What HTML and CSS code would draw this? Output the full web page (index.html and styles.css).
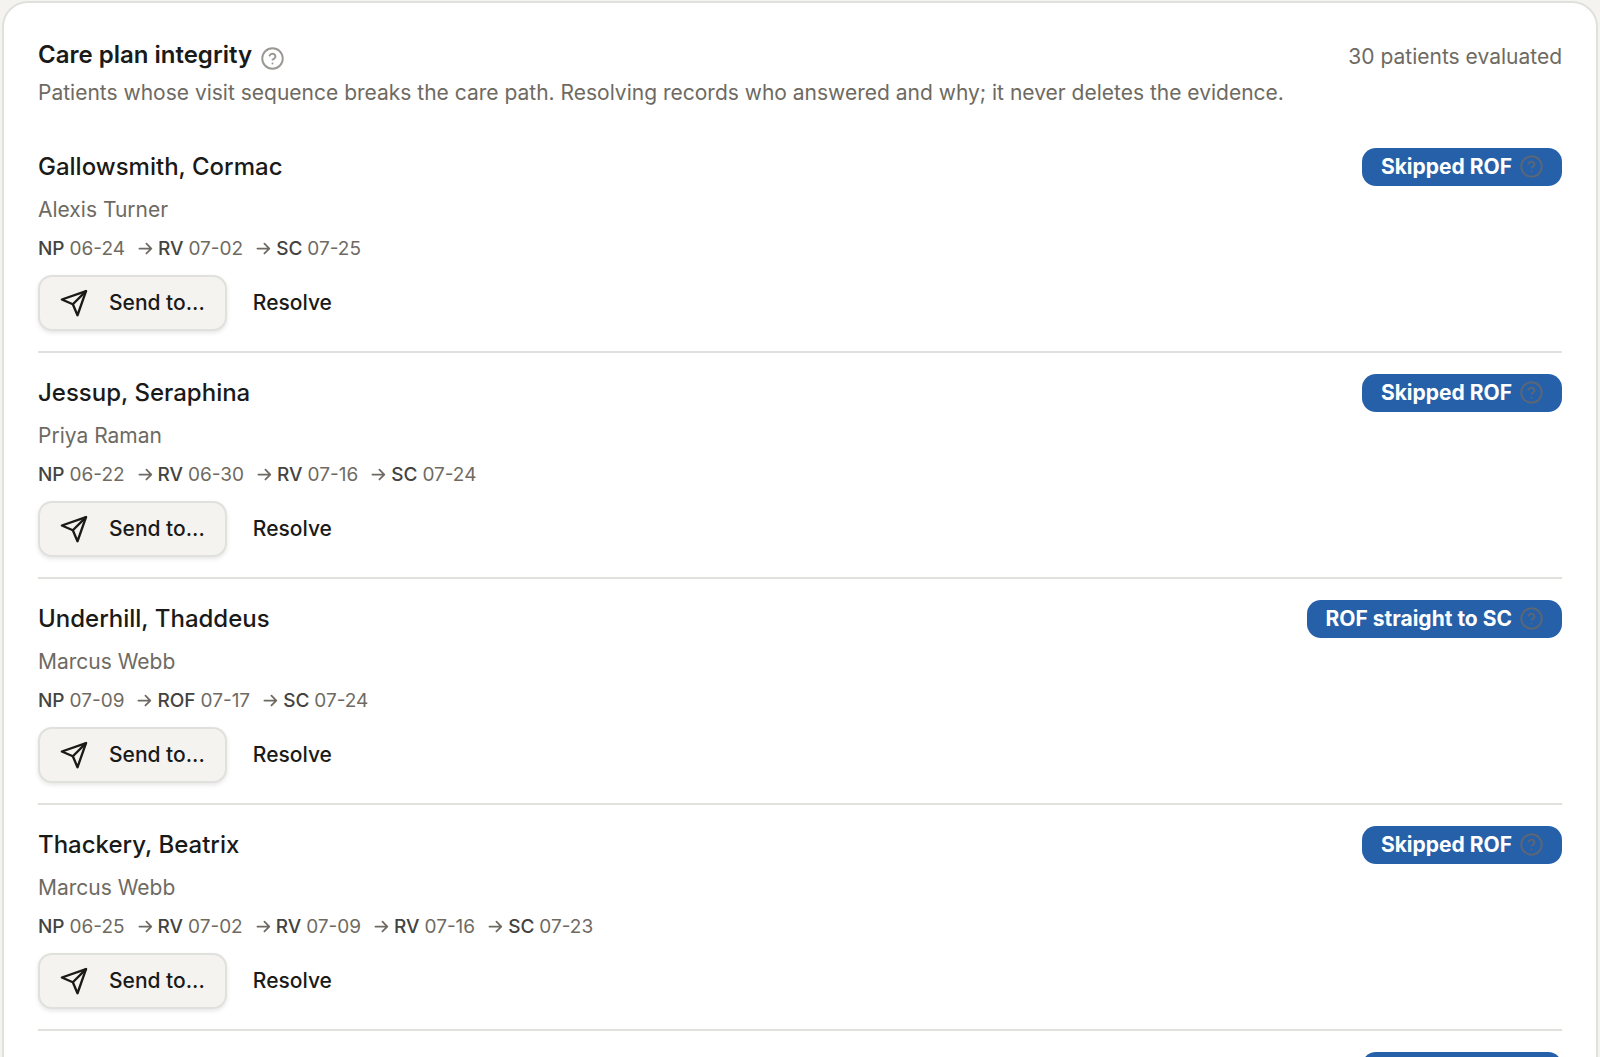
FILE: index.html
```html
<!DOCTYPE html>
<html lang="en">
<head>
<meta charset="utf-8">
<title>Care plan integrity</title>
<link rel="stylesheet" href="styles.css">
</head>
<body>
<svg class="sprite" aria-hidden="true">
  <symbol id="help" viewBox="0 0 24 24" fill="none" stroke="currentColor" stroke-width="2" stroke-linecap="round" stroke-linejoin="round"><circle cx="12" cy="12" r="10.700"/><path d="M9 9a3.100 3.100 0 0 1 6 1c0 2.100-3 3.100-3 3.100"/><path d="M12 17.200h.01"/></symbol>
  <symbol id="send" viewBox="0 0 24 24" fill="none" stroke="currentColor" stroke-width="2" stroke-linecap="round" stroke-linejoin="round"><path d="M22.300 1.800 15 22.500 11 13.100 1.600 9Z"/><path d="M22.300 1.800 11 13.100"/></symbol>
  <symbol id="arrow" viewBox="0 0 16 16" fill="none" stroke="currentColor" stroke-width="1.900" stroke-linecap="round" stroke-linejoin="round"><path d="M1.500 7h12.700M9 1.800 14.200 7 9 12.200"/></symbol>
</svg>
<main class="card">
  <header class="card-header">
    <div class="title-row">
      <h1 class="title">Care plan integrity</h1>
      <button class="help" type="button" aria-label="About care plan integrity"><svg class="icon-help"><use href="#help"/></svg></button>
      <span class="count">30 patients evaluated</span>
    </div>
    <p class="subtitle">Patients whose visit sequence breaks the care path. Resolving records who answered and why; it never deletes the evidence.</p>
  </header>
  <ul class="patients">
    <li class="patient">
      <div class="patient-head"><h2 class="name">Gallowsmith, Cormac</h2><span class="badge">Skipped ROF<svg class="icon-help"><use href="#help"/></svg></span></div>
      <p class="provider">Alexis Turner</p>
      <ol class="visits">
        <li class="visit"><b>NP</b> 06-24</li>
        <li class="visit"><svg class="icon-arrow"><use href="#arrow"/></svg><b>RV</b> 07-02</li>
        <li class="visit"><svg class="icon-arrow"><use href="#arrow"/></svg><b>SC</b> 07-25</li>
      </ol>
      <div class="actions"><button class="btn btn-send" type="button"><svg class="icon-send"><use href="#send"/></svg>Send to...</button><button class="btn btn-plain" type="button">Resolve</button></div>
    </li>
    <li class="patient">
      <div class="patient-head"><h2 class="name">Jessup, Seraphina</h2><span class="badge">Skipped ROF<svg class="icon-help"><use href="#help"/></svg></span></div>
      <p class="provider">Priya Raman</p>
      <ol class="visits">
        <li class="visit"><b>NP</b> 06-22</li>
        <li class="visit"><svg class="icon-arrow"><use href="#arrow"/></svg><b>RV</b> 06-30</li>
        <li class="visit"><svg class="icon-arrow"><use href="#arrow"/></svg><b>RV</b> 07-16</li>
        <li class="visit"><svg class="icon-arrow"><use href="#arrow"/></svg><b>SC</b> 07-24</li>
      </ol>
      <div class="actions"><button class="btn btn-send" type="button"><svg class="icon-send"><use href="#send"/></svg>Send to...</button><button class="btn btn-plain" type="button">Resolve</button></div>
    </li>
    <li class="patient">
      <div class="patient-head"><h2 class="name">Underhill, Thaddeus</h2><span class="badge">ROF straight to SC<svg class="icon-help"><use href="#help"/></svg></span></div>
      <p class="provider">Marcus Webb</p>
      <ol class="visits">
        <li class="visit"><b>NP</b> 07-09</li>
        <li class="visit"><svg class="icon-arrow"><use href="#arrow"/></svg><b>ROF</b> 07-17</li>
        <li class="visit"><svg class="icon-arrow"><use href="#arrow"/></svg><b>SC</b> 07-24</li>
      </ol>
      <div class="actions"><button class="btn btn-send" type="button"><svg class="icon-send"><use href="#send"/></svg>Send to...</button><button class="btn btn-plain" type="button">Resolve</button></div>
    </li>
    <li class="patient">
      <div class="patient-head"><h2 class="name">Thackery, Beatrix</h2><span class="badge">Skipped ROF<svg class="icon-help"><use href="#help"/></svg></span></div>
      <p class="provider">Marcus Webb</p>
      <ol class="visits">
        <li class="visit"><b>NP</b> 06-25</li>
        <li class="visit"><svg class="icon-arrow"><use href="#arrow"/></svg><b>RV</b> 07-02</li>
        <li class="visit"><svg class="icon-arrow"><use href="#arrow"/></svg><b>RV</b> 07-09</li>
        <li class="visit"><svg class="icon-arrow"><use href="#arrow"/></svg><b>RV</b> 07-16</li>
        <li class="visit"><svg class="icon-arrow"><use href="#arrow"/></svg><b>SC</b> 07-23</li>
      </ol>
      <div class="actions"><button class="btn btn-send" type="button"><svg class="icon-send"><use href="#send"/></svg>Send to...</button><button class="btn btn-plain" type="button">Resolve</button></div>
    </li>
    <li class="patient">
      <div class="patient-head"><span class="badge">Skipped ROF<svg class="icon-help"><use href="#help"/></svg></span></div>
    </li>
  </ul>
</main>
</body>
</html>
```
FILE: styles.css
```css
* { box-sizing: border-box; }
html { height: 100%; overflow: hidden; }
body {
  height: 100%;
  margin: 0;
  padding: 1px 2px 0;
  overflow: hidden;
  background: #f4f3ef;
  color: #1a1a18;
  font-family: Inter, "Liberation Sans", sans-serif;
  font-size: 21px;
}
h1, h2, p, ul, ol { margin: 0; padding: 0; }
ul, ol { list-style: none; }
button { font: inherit; color: inherit; }
svg { display: block; flex: none; overflow: visible; }
.sprite { position: absolute; width: 0; height: 0; overflow: hidden; }

.card {
  padding: 36px 34px;
  background: #fff;
  border: 2px solid #e0e0dc;
  border-radius: 26px;
}
.title-row { display: flex; align-items: center; }
.title { padding-bottom: 4px; font-size: 24px; line-height: 32px; font-weight: 600; }
.help {
  margin: 2px 0 0 9px;
  padding: 0;
  border: 0;
  background: none;
  color: #9b9893;
}
.icon-help { width: 23px; height: 23px; }
.count { margin-left: auto; color: #6e6a62; line-height: 36px; }
.subtitle { margin-top: 3px; line-height: 30px; color: #6e6a62; }

.patients { margin-top: 19px; }
.patient {
  display: flex;
  flex-direction: column;
  gap: 8px;
  padding: 21px 0 20px;
  border-bottom: 2px solid #e0e0dc;
}
.patient-head { display: flex; align-items: center; min-height: 38px; }
.name { font-size: 24px; line-height: 34px; font-weight: 500; }
.badge {
  display: flex;
  align-items: center;
  gap: 8px;
  height: 38px;
  margin-left: auto;
  padding: 0 19px 1px;
  border-radius: 14px;
  background: #2660a8;
  color: #fff;
  font-weight: 700;
}
.badge .icon-help { color: #5b6676; }
.provider { line-height: 32px; color: #6e6a62; }
.visits {
  display: flex;
  gap: 13px;
  font-size: 19px;
  line-height: 30px;
  color: #6e6a62;
}
.visit { display: flex; align-items: center; gap: 5px; }
.visit b { font-weight: 500; color: #44433f; }
.icon-arrow { width: 15px; height: 15px; }
.actions { display: flex; gap: 4px; margin-top: 3px; }
.btn {
  display: flex;
  align-items: center;
  height: 56px;
  padding: 0 20px 1px;
  border: 2px solid transparent;
  border-radius: 14px;
  background: none;
  font-weight: 500;
}
.btn-send {
  gap: 21px;
  border-color: #e0e0dc;
  background: #f4f3ef;
  box-shadow: 0 2px 4px rgba(0, 0, 0, 0.1);
}
.icon-send { width: 28px; height: 28px; }
```
